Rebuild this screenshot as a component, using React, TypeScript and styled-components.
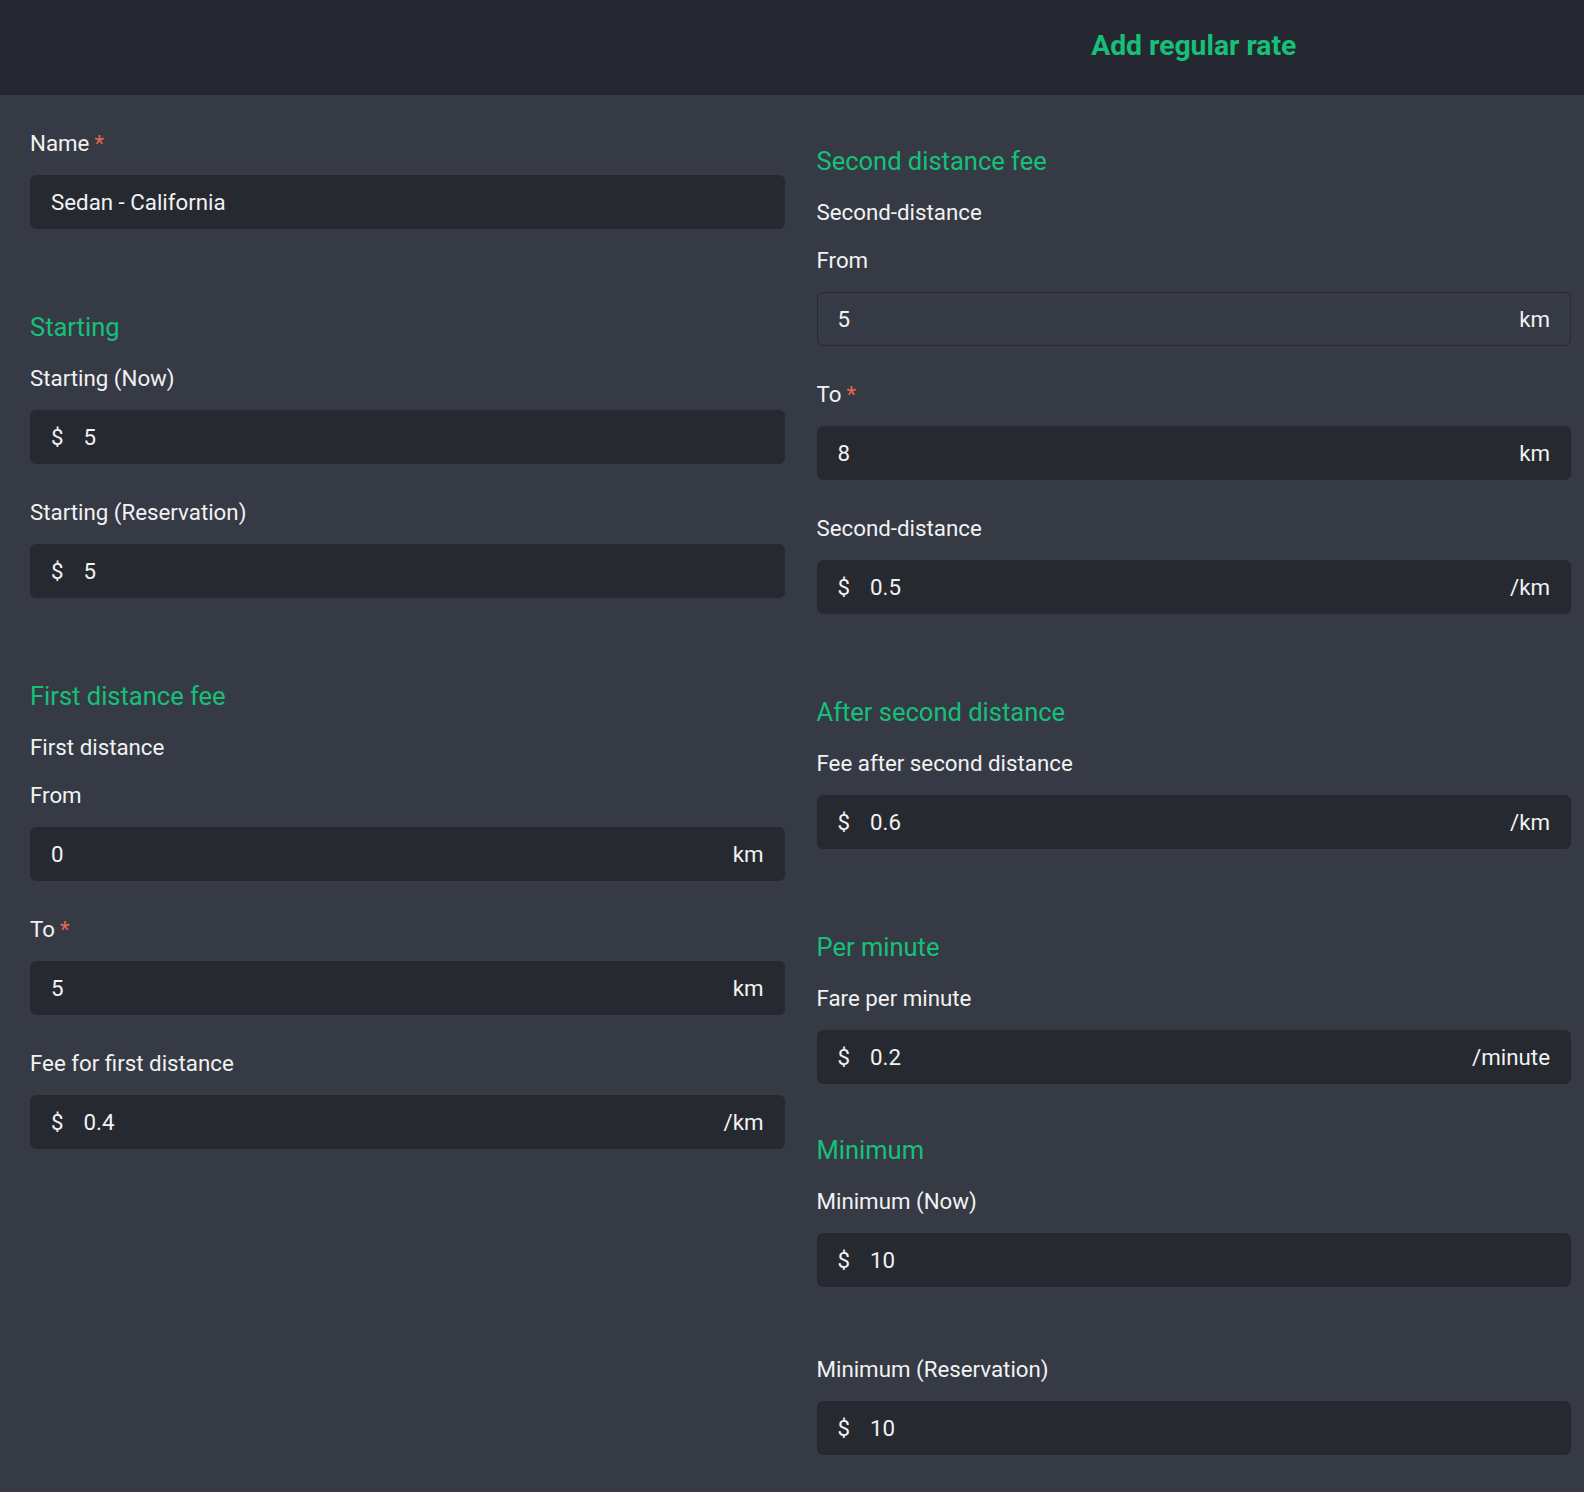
import React from 'react';
import styled, { createGlobalStyle } from 'styled-components';

const GlobalStyle = createGlobalStyle`
	* {
		box-sizing: border-box;
	}

	body {
		margin: 0;
		background: #363a45;
		font-family: Roboto, "Liberation Sans", sans-serif;
		color: #f2f2f2;
	}
`;

const Header = styled.header`
	display: grid;
	grid-template-columns: 1fr 1fr;
	column-gap: 32px;
	height: 95px;
	padding: 0 13px 4px 30px;
	background: #252830;
	align-items: center;
`;

const Title = styled.h1`
	grid-column: 2;
	margin: 0;
	text-align: center;
	font-size: 28.3px;
	font-weight: 700;
	color: #16c078;
`;

const Form = styled.div`
	display: grid;
	grid-template-columns: 1fr 1fr;
	column-gap: 32px;
	padding: 35px 13px 40px 30px;
`;

const Column = styled.div<{ $offset?: number }>`
	display: flex;
	flex-direction: column;
	padding-top: ${(props) => props.$offset || 0}px;
`;

const Section = styled.section<{ $gap?: number }>`
	display: flex;
	flex-direction: column;
	margin-top: ${(props) => props.$gap ?? 83}px;

	&:first-child {
		margin-top: 0;
	}
`;

const Heading = styled.h2`
	margin: 0 0 23px;
	font-size: 25.5px;
	line-height: 30px;
	font-weight: 400;
	color: #16c078;
`;

const Label = styled.div<{ $after?: number }>`
	font-size: 22.3px;
	line-height: 26px;
	margin-bottom: ${(props) => props.$after ?? 19}px;
`;

const Required = styled.span`
	color: #e8664f;
	margin-left: 5px;
`;

const Field = styled.div<{ $gap?: number }>`
	display: flex;
	flex-direction: column;
	margin-bottom: ${(props) => props.$gap ?? 35}px;

	&:last-child {
		margin-bottom: 0;
	}
`;

const InputBox = styled.div<{ $outlined?: boolean }>`
	display: flex;
	align-items: center;
	height: 54px;
	padding: 0 20px;
	border-radius: 6px;
	font-size: 22.3px;
	background: ${(props) => (props.$outlined ? 'transparent' : '#262930')};
	border: 1px solid ${(props) => (props.$outlined ? '#272a31' : '#262930')};
`;

const Prefix = styled.span`
	margin-right: 20px;
`;

const Value = styled.span`
	flex: 1;
`;

const Suffix = styled.span``;

type InputProps = {
	label: string;
	value: string;
	prefix?: string;
	suffix?: string;
	required?: boolean;
	outlined?: boolean;
	gap?: number;
};

const Input = ({ label, value, prefix, suffix, required, outlined, gap }: InputProps) => (
	<Field $gap={gap}>
		<Label>
			{label}
			{required && <Required>*</Required>}
		</Label>
		<InputBox $outlined={outlined}>
			{prefix && <Prefix>{prefix}</Prefix>}
			<Value>{value}</Value>
			{suffix && <Suffix>{suffix}</Suffix>}
		</InputBox>
	</Field>
);

const App = () => {
	return (
		<>
			<GlobalStyle />
			<Header>
				<Title>Add regular rate</Title>
			</Header>
			<Form>
				<Column>
					<Section>
						<Input label="Name" required value="Sedan - California" />
					</Section>
					<Section>
						<Heading>Starting</Heading>
						<Input label="Starting (Now)" prefix="$" value="5" />
						<Input label="Starting (Reservation)" prefix="$" value="5" />
					</Section>
					<Section>
						<Heading>First distance fee</Heading>
						<Label $after={22}>First distance</Label>
						<Input label="From" value="0" suffix="km" />
						<Input label="To" required value="5" suffix="km" />
						<Input label="Fee for first distance" prefix="$" value="0.4" suffix="/km" />
					</Section>
				</Column>
				<Column $offset={16}>
					<Section>
						<Heading>Second distance fee</Heading>
						<Label $after={22}>Second-distance</Label>
						<Input label="From" value="5" suffix="km" outlined />
						<Input label="To" required value="8" suffix="km" />
						<Input label="Second-distance" prefix="$" value="0.5" suffix="/km" />
					</Section>
					<Section>
						<Heading>After second distance</Heading>
						<Input label="Fee after second distance" prefix="$" value="0.6" suffix="/km" />
					</Section>
					<Section>
						<Heading>Per minute</Heading>
						<Input label="Fare per minute" prefix="$" value="0.2" suffix="/minute" />
					</Section>
					<Section $gap={51}>
						<Heading>Minimum</Heading>
						<Input label="Minimum (Now)" prefix="$" value="10" gap={69} />
						<Input label="Minimum (Reservation)" prefix="$" value="10" />
					</Section>
				</Column>
			</Form>
		</>
	);
};

export default App;
